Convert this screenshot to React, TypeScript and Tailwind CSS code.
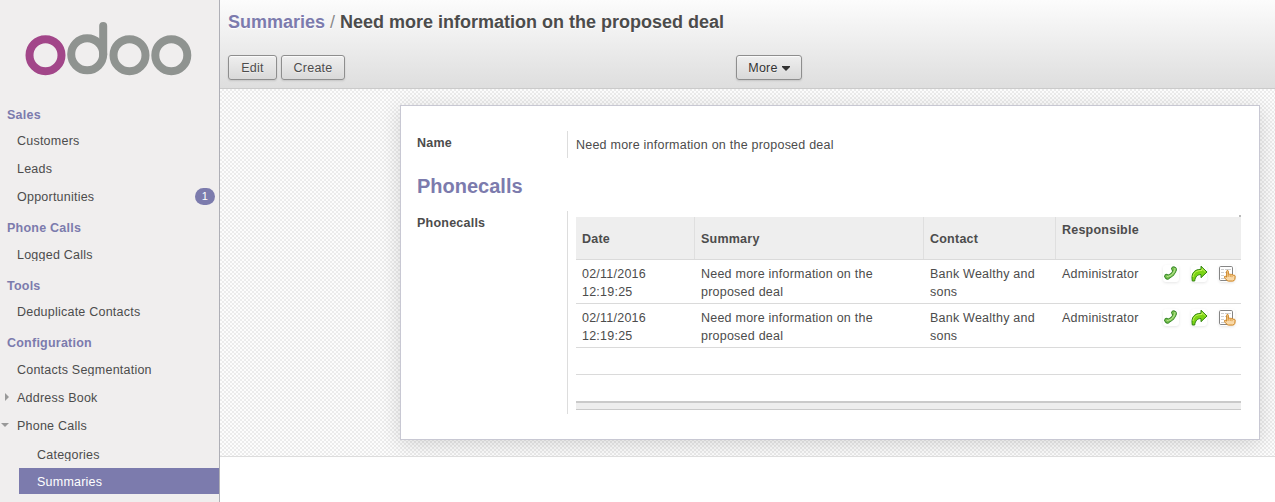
import React from "react";

type Item = { label: string; gap: string; clip?: boolean; badge?: string; arrow?: "right" | "down" };
type Section = { title: string; gap: string; items: Item[] };

const sections: Section[] = [
  {
    title: "Sales",
    gap: "mt-0",
    items: [
      { label: "Customers", gap: "mt-[6px]" },
      { label: "Leads", gap: "mt-2" },
      { label: "Opportunities", gap: "mt-2", badge: "1" },
    ],
  },
  { title: "Phone Calls", gap: "mt-[11px]", items: [{ label: "Logged Calls", gap: "mt-[7px]", clip: true }] },
  { title: "Tools", gap: "mt-[11px]", items: [{ label: "Deduplicate Contacts", gap: "mt-[6px]" }] },
  {
    title: "Configuration",
    gap: "mt-[11px]",
    items: [
      { label: "Contacts Segmentation", gap: "mt-[7px]", clip: true },
      { label: "Address Book", gap: "mt-2", arrow: "right" },
      { label: "Phone Calls", gap: "mt-2", arrow: "down" },
    ],
  },
];

const rows = [
  { date: "02/11/2016 12:19:25", summary: "Need more information on the proposed deal", contact: "Bank Wealthy and sons", user: "Administrator" },
  { date: "02/11/2016 12:19:25", summary: "Need more information on the proposed deal", contact: "Bank Wealthy and sons", user: "Administrator" },
];

function Logo() {
  return (
    <svg className="mt-[22px] ml-[24px] block h-[54px] w-[170px]" viewBox="24 22 170 54" fill="none" strokeWidth="8">
      <circle cx="45.500" cy="55.200" r="16" stroke="#a24689" />
      <circle cx="87.200" cy="54.300" r="16" stroke="#8f9390" />
      <path d="M103.200 54.500V26" stroke="#8f9390" strokeLinecap="round" />
      <circle cx="129.500" cy="55.200" r="16" stroke="#8f9390" />
      <circle cx="171.300" cy="55.200" r="16" stroke="#8f9390" />
    </svg>
  );
}

function SideItem({ item }: { item: Item }) {
  return (
    <div className={`relative flex h-5 items-start pr-1 pl-[17px] ${item.gap}`}>
      <span className={item.clip ? "h-4 overflow-hidden" : "h-5"}>{item.label}</span>
      {item.badge && (
        <span className="mt-[1px] ml-auto h-[17px] w-5 rounded-full bg-[#7c7bad] text-center text-[11px] leading-[17px] text-white">
          {item.badge}
        </span>
      )}
      {item.arrow === "right" && (
        <svg className="absolute top-[5px] left-[5px]" width="4" height="8" viewBox="0 0 4 8"><path d="M0 0l4 4-4 4z" fill="#999" /></svg>
      )}
      {item.arrow === "down" && (
        <svg className="absolute top-[7px] left-[1px]" width="8" height="4" viewBox="0 0 8 4"><path d="M0 0h8L4 4z" fill="#999" /></svg>
      )}
    </div>
  );
}

function Button({ children, className }: { children: React.ReactNode; className: string }) {
  return (
    <button
      className={`flex h-[25px] items-center justify-center rounded-[3px] border border-[#8e8e8e] bg-linear-to-b from-[#efefef] to-[#d9d9d9] pt-px shadow-[0_1px_2px_rgba(0,0,0,0.12),inset_0_1px_1px_rgba(255,255,255,0.8)] [text-shadow:0_1px_1px_rgba(255,255,255,0.5)] ${className}`}
    >
      {children}
    </button>
  );
}

function PhoneIcon() {
  return (
    <svg width="16" height="16" viewBox="0 0 16 16" fill="none" strokeLinecap="round">
      <path d="M11.700 4C12 7.500 8 11.800 4 12" stroke="#3a8a2c" strokeWidth="4" />
      <path d="M10.600 3.800L11.300 4.700M3.600 11.400L4.600 12.200" stroke="#3a8a2c" strokeWidth="5" />
      <path d="M11.700 4C12 7.500 8 11.800 4 12" stroke="#8ccd60" strokeWidth="2.200" />
      <path d="M10.600 3.800L11.300 4.700M3.600 11.400L4.600 12.200" stroke="#79c24e" strokeWidth="3" />
      <path d="M11.900 3.300C12.300 7 8.500 11 4.200 11.600" stroke="#c5ecA0" strokeWidth=".8" />
    </svg>
  );
}

function ForwardIcon() {
  return (
    <svg width="17" height="17" viewBox="0 0 17 17">
      <path d="M10 1.200l6 5.800-6 5.700V9.600C6.500 9.400 4.300 11.500 3.700 16H1.300C-.2 8.500 3.200 4.400 10 4.300z" fill="#7bd414" stroke="#318310" />
      <path d="M2 12C2.500 7.500 5.300 5.600 11 5.500V3.600l3.500 3.400" fill="none" stroke="#c5f35b" />
    </svg>
  );
}

function NoteIcon() {
  return (
    <svg width="17" height="17" viewBox="0 0 17 17">
      <rect x=".5" y="1.500" width="13" height="14" rx="1.200" fill="#fff" stroke="#858585" />
      <path d="M2 4.500h3M6 4.500h6M2 7.500h3M6 7.500h2M2 10.500h3M2 13.500h4" stroke="#cfcfcf" />
      <path
        d="M7.700 6.200c0-1 1.600-1 1.600 0V9.500c.3-.6 1.700-.5 1.800.1.400-.6 1.700-.4 1.800.3.500-.6 1.700-.2 1.700.5.500-.4 1.500 0 1.500.7 0 2.500-.1 4.800-2.300 5H9.500C8 16 6.400 13.900 5.500 12.200c-.4-1 1-1.400 2.200-.1z"
        fill="#f9d9a8" stroke="#cb7d14"
      />
      <path d="M9.300 9.800v2M11.200 10v2M13 10.200v2" stroke="#d88e2b" strokeWidth=".8" />
    </svg>
  );
}

function IconBox({ children }: { children: React.ReactNode }) {
  return <span className="h-[17px] w-4 rounded-[3px] shadow-[0_1px_3px_rgba(0,0,0,0.1)] [&>svg]:max-w-none">{children}</span>;
}

const grid = "grid grid-cols-[119px_229px_132px_185px]";

export default function App() {
  return (
    <div className="flex h-[502px] w-[1275px] overflow-hidden bg-white font-['Liberation_Sans',Arial,sans-serif] text-[12.5px] leading-5 tracking-[0.23px] text-[#4c4c4c]">
      <aside className="h-full w-[220px] shrink-0 border-r border-[#afafb6] bg-[#f0eeee]">
        <Logo />
        <nav className="mt-[29px]">
          {sections.map((s) => (
            <section key={s.title}>
              <h2 className={`h-5 pl-[7px] font-bold text-[#7c7bad] ${s.gap}`}>{s.title}</h2>
              {s.items.map((i) => <SideItem key={i.label} item={i} />)}
            </section>
          ))}
          <div className="mt-[9px] h-4 overflow-hidden pl-[37px]">Categories</div>
          <div className="mt-[7px] ml-[19px] h-[26px] bg-[#7c7bad] pl-[18px] leading-7 text-white">Summaries</div>
        </nav>
      </aside>

      <main className="flex min-w-0 flex-1 flex-col">
        <header className="h-[89px] border-b border-[#cacaca] bg-linear-to-b from-[#fcfcfc] to-[#dedede] pl-2">
          <h1 className="h-[55px] pt-[11px] text-[18px] leading-[22px] font-bold tracking-normal [text-shadow:0_1px_1px_#fff]">
            <span className="text-[#7c7bad]">Summaries</span>
            <span className="font-normal text-[#8a8a8a]"> / </span>
            <span>Need more information on the proposed deal</span>
          </h1>
          <div className="flex">
            <Button className="w-[49px]">Edit</Button>
            <Button className="ml-1 w-16">Create</Button>
            <Button className="ml-[391px] w-[66px] gap-1 text-[#333]">
              More
              <svg width="8" height="5" viewBox="0 0 8 5"><path d="M0 0h8v1L4 5 0 1z" fill="#333" /></svg>
            </Button>
          </div>
        </header>

        <div className="h-[368px] border-b border-[#ddd] bg-[repeating-conic-gradient(#ececec_0%_25%,#fdfdfd_0%_50%)] bg-[length:4px_4px] pt-4 pl-[180px]">
          <div className="h-[335px] w-[860px] border border-[#c8c8d3] bg-white pt-[25px] pl-4 shadow-[0_4px_20px_rgba(0,0,0,0.15)] [clip-path:inset(-16px_-15px_-16px_-40px)]">
            <div className="flex h-[27px]">
              <label className="w-[150px] pt-[2px] font-bold">Name</label>
              <div className="border-l border-[#ddd] pt-[4px] pl-2">Need more information on the proposed deal</div>
            </div>
            <h2 className="h-[53px] pt-[15px] text-[20px] leading-[26px] font-bold tracking-normal text-[#7c7bad]">Phonecalls</h2>
            <div className="flex h-[203px]">
              <label className="w-[150px] pt-[2px] font-bold">Phonecalls</label>
              <div className="w-[674px] border-l border-[#ddd] pt-1 pl-2">
                <div className="ml-auto h-[2px] w-[2px] bg-[#bbb]" />
                <div className={`${grid} h-[43px] border-b border-[#dadada] bg-[#eee] font-bold`}>
                  <span className="border-r border-[#dfdfdf] pt-3 pl-[6px]">Date</span>
                  <span className="border-r border-[#dfdfdf] pt-3 pl-[6px]">Summary</span>
                  <span className="border-r border-[#dfdfdf] pt-3 pl-[6px]">Contact</span>
                  <span className="pt-[3px] pl-[6px]">Responsible</span>
                </div>
                {rows.map((r, i) => (
                  <div key={i} className={`${grid} h-11 border-b border-[#dadada] pt-[5px] leading-[18px]`}>
                    <span className="pr-10 pl-[6px]">{r.date}</span>
                    <span className="pr-10 pl-[6px]">{r.summary}</span>
                    <span className="pr-[10px] pl-[6px]">{r.contact}</span>
                    <span className="flex gap-3 pl-[6px]">
                      <span className="w-[89px]">{r.user}</span>
                      <IconBox><PhoneIcon /></IconBox>
                      <IconBox><ForwardIcon /></IconBox>
                      <IconBox><NoteIcon /></IconBox>
                    </span>
                  </div>
                ))}
                <div className="h-[27px] border-b border-[#dadada]" />
                <div className="h-[26px]" />
                <div className="h-[9px] border-t-2 border-b border-[#cacaca] bg-[#eee]" />
              </div>
            </div>
          </div>
        </div>
      </main>
    </div>
  );
}
